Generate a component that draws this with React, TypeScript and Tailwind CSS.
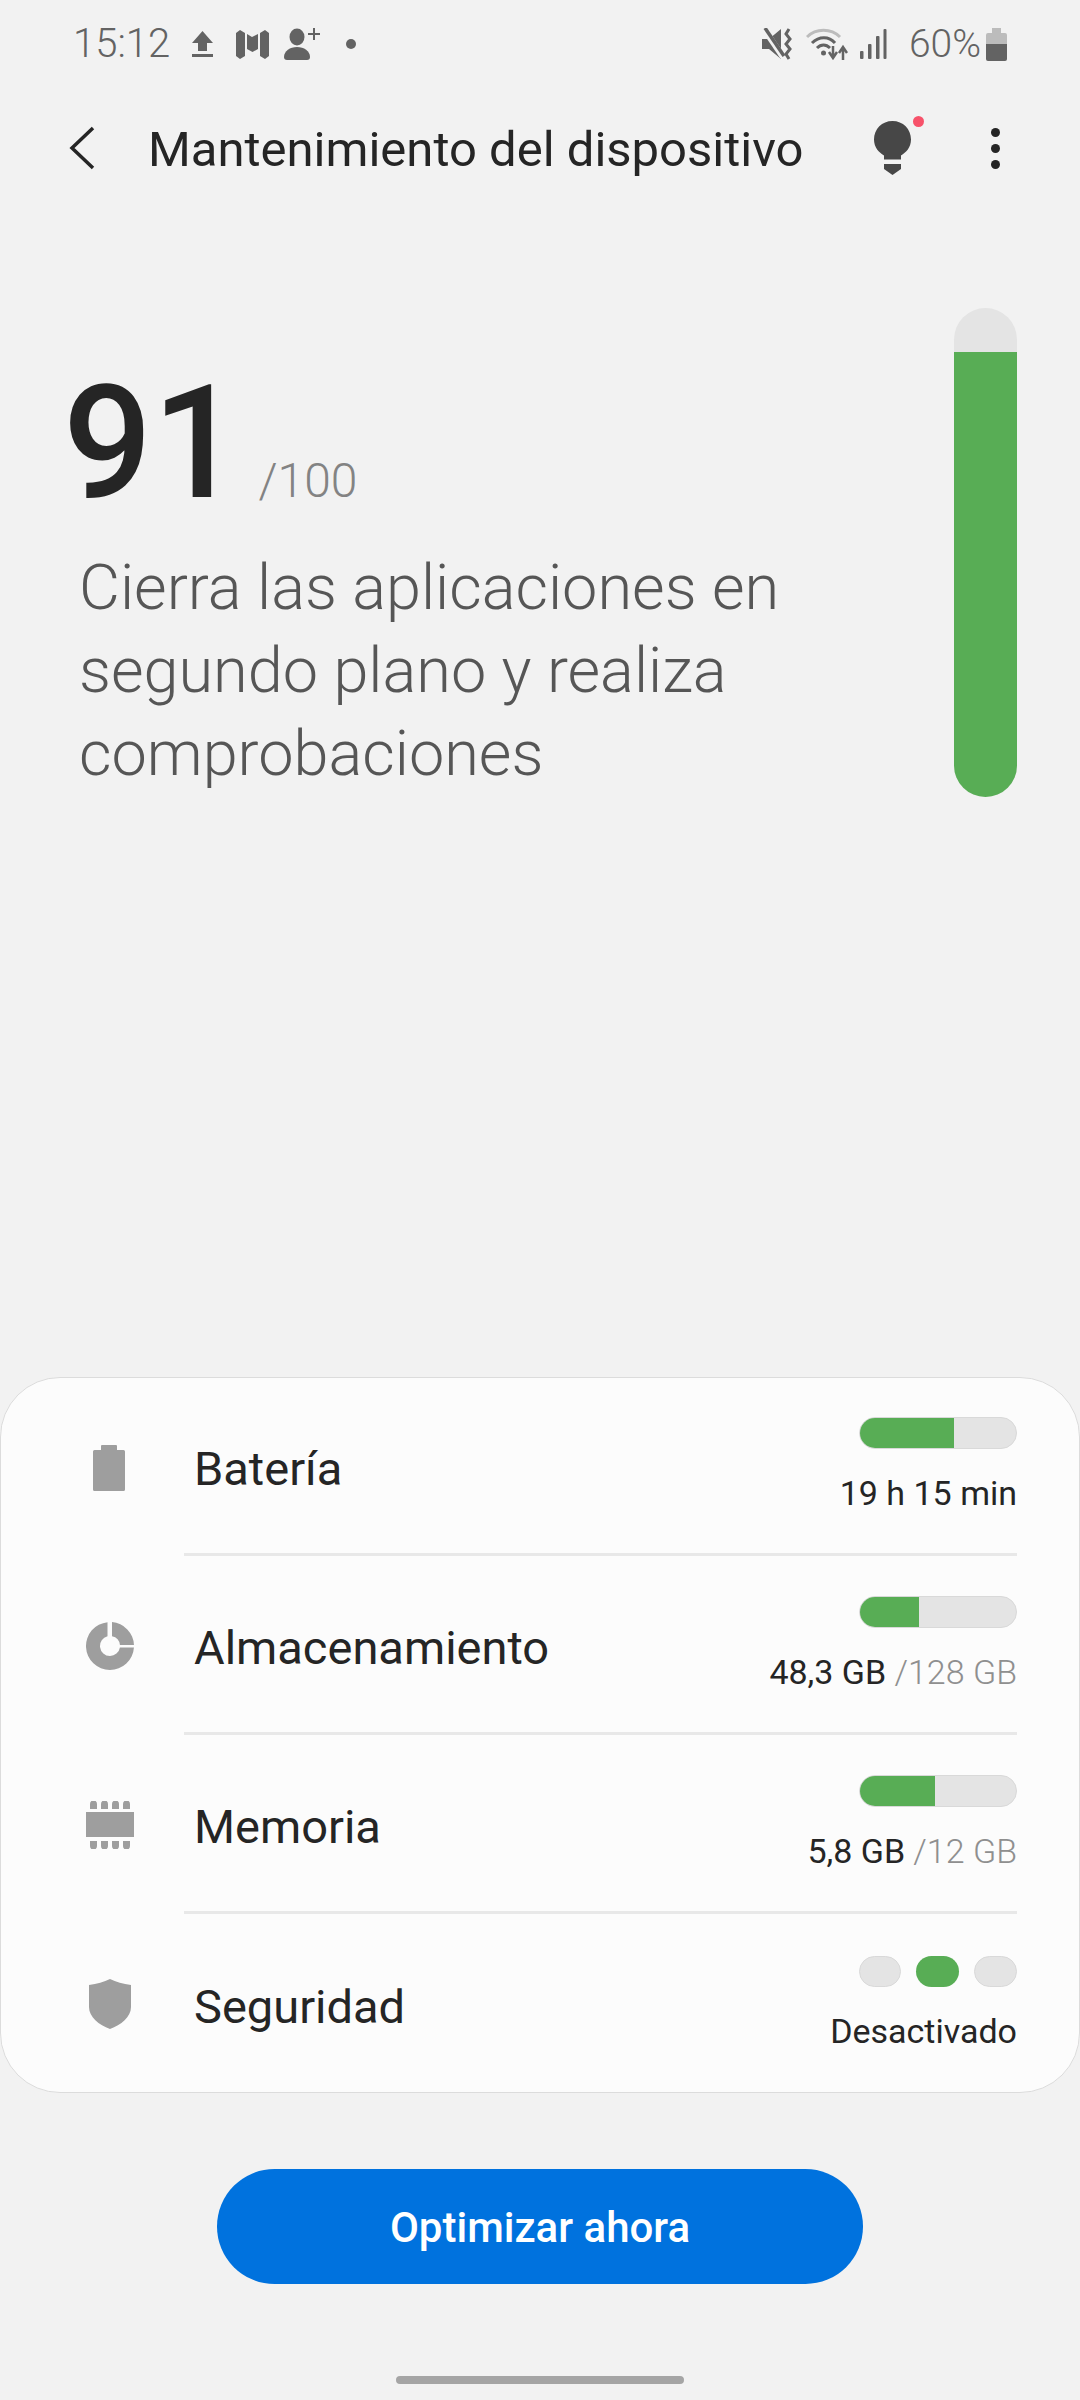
const rows = [
  { label: 'Batería', used: '19 h 15 min', total: '', fill: 95, icon: 'battery' },
  { label: 'Almacenamiento', used: '48,3 GB', total: '/128 GB', fill: 60, icon: 'pie' },
  { label: 'Memoria', used: '5,8 GB', total: '/12 GB', fill: 76, icon: 'chip' },
  { label: 'Seguridad', used: 'Desactivado', total: '', fill: 0, icon: 'shield' },
];

function RowIcon({ name }: { name: string }) {
  if (name === 'battery') {
    return (
      <svg width="48" height="48" viewBox="0 0 48 48" fill="#9e9e9e">
        <path d="M16 2h14a1 1 0 0 1 1 1v4h6.500a1.500 1.500 0 0 1 1.500 1.500v38a1.500 1.500 0 0 1-1.500 1.500h-29A1.500 1.500 0 0 1 7 46.500v-38A1.500 1.500 0 0 1 8.500 7H15V3a1 1 0 0 1 1-1z" />
      </svg>
    );
  }
  if (name === 'pie') {
    return (
      <svg width="48" height="48" viewBox="0 0 48 48" fill="#9e9e9e">
        <path d="M21.500 0.130V14.300A10 10 0 1 0 33.900 25.500H47.950A24 24 0 1 1 21.500 0.130z" />
        <path d="M26 0.080A24 24 0 0 1 47.980 23H33.950A10 10 0 0 0 26 14.200z" />
      </svg>
    );
  }
  if (name === 'chip') {
    return (
      <svg width="48" height="48" viewBox="0 0 48 48" fill="#9e9e9e">
        <rect x="0" y="11" width="48" height="25" />
        {[4, 15, 26, 37].map((x) => (
          <g key={x}>
            <path d={`M${x} 8V3a3 3 0 0 1 7 0v5z`} />
            <path d={`M${x} 40v5a3 3 0 0 0 7 0v-5z`} />
          </g>
        ))}
      </svg>
    );
  }
  return (
    <svg width="48" height="52" viewBox="0 0 48 52" fill="#9e9e9e">
      <path d="M24 1c6 3 13 5 21 6v22c0 10-10 18-21 22C13 47 3 39 3 29V7c8-1 15-3 21-6z" />
    </svg>
  );
}

function Bar({ fill }: { fill: number }) {
  return (
    <div className="h-[32px] w-[158px] overflow-hidden rounded-full border border-[#d9d9d9] bg-[#e4e4e4]">
      <div className="-m-px h-[32px] bg-[#58ad55]" style={{ width: fill }} />
    </div>
  );
}

function Levels() {
  return (
    <div className="flex gap-[15px]">
      <div className="h-[31px] w-[42px] rounded-full border border-[#d9d9d9] bg-[#e4e4e4]" />
      <div className="h-[31px] w-[43px] rounded-full bg-[#58ad55]" />
      <div className="h-[31px] w-[43px] rounded-full border border-[#d9d9d9] bg-[#e4e4e4]" />
    </div>
  );
}

function StatusBar() {
  return (
    <div className="flex h-[88px] items-center pl-[73px] pr-[73px] text-[#636363]">
      <span className="text-[40px] leading-none font-light">15:12</span>
      <svg className="ml-[22px]" width="21" height="27" viewBox="0 0 21 27" fill="#636363">
        <path d="M10.5 0L21 12h-6v8H6v-8H0zM0 23h21v3H0z" />
      </svg>
      <svg className="ml-[23px]" width="33" height="29" viewBox="0 0 33 29" fill="#636363">
        <path d="M0 3l4-3 5 3v23l-5 3-4-3zM11 4l5 3 6-3v15l-5.500 3-5.500-3zM24 3l5-3 4 3v23l-4 3-5-3z" />
      </svg>
      <svg className="ml-[15px]" width="36" height="32" viewBox="0 0 36 32" fill="#636363">
        <ellipse cx="13" cy="9" rx="7.500" ry="8.500" />
        <path d="M0 29c0-6 6-10 13-10s13 4 13 10c0 2-1 3-3 3H3c-2 0-3-1-3-3z" />
        <path d="M29 0h2v5h5v2h-5v5h-2V7h-5V5h5z" />
      </svg>
      <div className="ml-[26px] size-[10px] rounded-full bg-[#636363]" />
      <div className="flex-1" />
      <svg width="32" height="32" viewBox="0 0 32 32" fill="none">
        <path d="M0 11h7L19 1v30L7 21H0z" fill="#636363" />
        <path d="M2 1l19 28" stroke="#f2f2f2" strokeWidth="6" />
        <path d="M3 0l19 28" stroke="#636363" strokeWidth="3.500" />
        <path d="M27 1l-3 5 4 5-4 5 4 5-4 5 3 5" stroke="#636363" strokeWidth="3" />
      </svg>
      <svg className="ml-[12px]" width="42" height="32" viewBox="0 0 42 32" fill="none">
        <path d="M1 9C10 0 25 0 34 9" stroke="#bcbcbc" strokeWidth="3" />
        <path d="M6 15C13 8 23 8 29 15" stroke="#636363" strokeWidth="3" />
        <path d="M11 20c4-4 9-4 13 0" stroke="#636363" strokeWidth="3" />
        <circle cx="17.500" cy="25" r="2.500" fill="#636363" />
        <path d="M27 18v10M23 24l4 6 4-6M37 32V21M33 25l4-6 4 6" stroke="#636363" strokeWidth="2.500" />
      </svg>
      <svg className="ml-[12px]" width="27" height="30" viewBox="0 0 27 30" fill="#636363">
        <rect x="0" y="22" width="3.500" height="8" rx="1" />
        <rect x="8" y="15" width="3.500" height="15" rx="1" />
        <rect x="16" y="7" width="3.500" height="23" rx="1" />
        <rect x="23.500" y="0" width="3" height="30" rx="1" />
      </svg>
      <span className="ml-[22px] text-[39px] leading-none font-light">60%</span>
      <svg className="ml-[5px]" width="21" height="33" viewBox="0 0 21 33">
        <path d="M6 0h9v5h4a2 2 0 0 1 2 2v9H0V7a2 2 0 0 1 2-2h4z" fill="#bcbcbc" />
        <path d="M0 16h21v15a2 2 0 0 1-2 2H2a2 2 0 0 1-2-2z" fill="#636363" />
      </svg>
    </div>
  );
}

export default function App() {
  return (
    <div className="flex h-[2400px] w-[1080px] flex-col overflow-hidden bg-[#f2f2f2] font-['Roboto',sans-serif] text-[#252525]">
      <StatusBar />

      <div className="flex h-[120px] items-center pl-[69px]">
        <svg width="26" height="44" viewBox="0 0 26 44" fill="none">
          <path d="M24 2L3 22l21 20" stroke="#252525" strokeWidth="3.500" />
        </svg>
        <h1 className="ml-[53px] flex-1 pt-[3px] text-[49px] leading-none font-normal">Mantenimiento del dispositivo</h1>
        <div className="relative mr-[80px] h-[54px] w-[37px]">
          <svg width="37" height="54" viewBox="0 0 37 54" fill="#474747">
            <path d="M18.500 0C29 0 37 8 37 18.500c0 8-5 13-10 16v4H10v-4C5 31.500 0 26.500 0 18.500 0 8 8 0 18.500 0z" />
            <path d="M10 43h17v5l-8.500 6L10 48z" />
          </svg>
          <div className="absolute -top-[5px] -right-[13px] size-[11px] rounded-full bg-[#f7526a]" />
        </div>
        <div className="mr-[80px] flex flex-col gap-[7px]">
          <div className="size-[9px] rounded-full bg-[#252525]" />
          <div className="size-[9px] rounded-full bg-[#252525]" />
          <div className="size-[9px] rounded-full bg-[#252525]" />
        </div>
      </div>

      <div className="mt-[100px] flex h-[489px] justify-between pr-[63px]">
        <div className="pt-[57px]">
          <div className="flex items-baseline pl-[63px]">
            <span className="text-[157px] leading-[156px] font-medium">91</span>
            <span className="ml-[17px] pt-[1px] text-[48px] leading-none font-light text-[#838383]">/100</span>
          </div>
          <p className="mt-[25px] w-[800px] pl-[79px] text-[63px] leading-[83px] font-light text-[#565656]">
            Cierra las aplicaciones en segundo plano y realiza comprobaciones
          </p>
        </div>
        <div className="flex h-[489px] w-[63px] flex-col overflow-hidden rounded-full bg-[#e4e4e4]">
          <div className="mt-[44px] flex-1 bg-[#58ad55]" />
        </div>
      </div>

      <div className="mt-[580px] h-[716px] rounded-[60px] border border-[#dcdcdc] bg-[#fcfcfc]">
        <div className="-mt-px">
          {rows.map((row, i) => (
            <div key={row.label} className="flex h-[179px] items-center">
              <div className="flex w-[183px] justify-start pl-[85px]">
                <RowIcon name={row.icon} />
              </div>
              <div className={`mr-[62px] flex h-full flex-1 items-center justify-between pl-[10px] ${i < 3 ? 'border-b-[3px] border-[#e8e8e8]' : ''}`}>
                <span className="pt-[6px] text-[47px] leading-none">{row.label}</span>
                <div className="flex flex-col items-end gap-[24px]">
                  {row.fill > 0 ? <Bar fill={row.fill} /> : <Levels />}
                  <div className="text-[34px] leading-[40px]">
                    {row.used}
                    {row.total && <span className="font-light text-[#8f8f8f]"> {row.total}</span>}
                  </div>
                </div>
              </div>
            </div>
          ))}
        </div>
      </div>

      <div className="mt-[76px] flex justify-center">
        <button className="h-[115px] w-[646px] rounded-full bg-[#0072de] pt-[2px] text-[42px] font-medium text-white">
          Optimizar ahora
        </button>
      </div>

      <div className="mt-[92px] flex justify-center">
        <div className="h-[8px] w-[288px] rounded-full bg-[#a5a5a5]" />
      </div>
    </div>
  );
}
